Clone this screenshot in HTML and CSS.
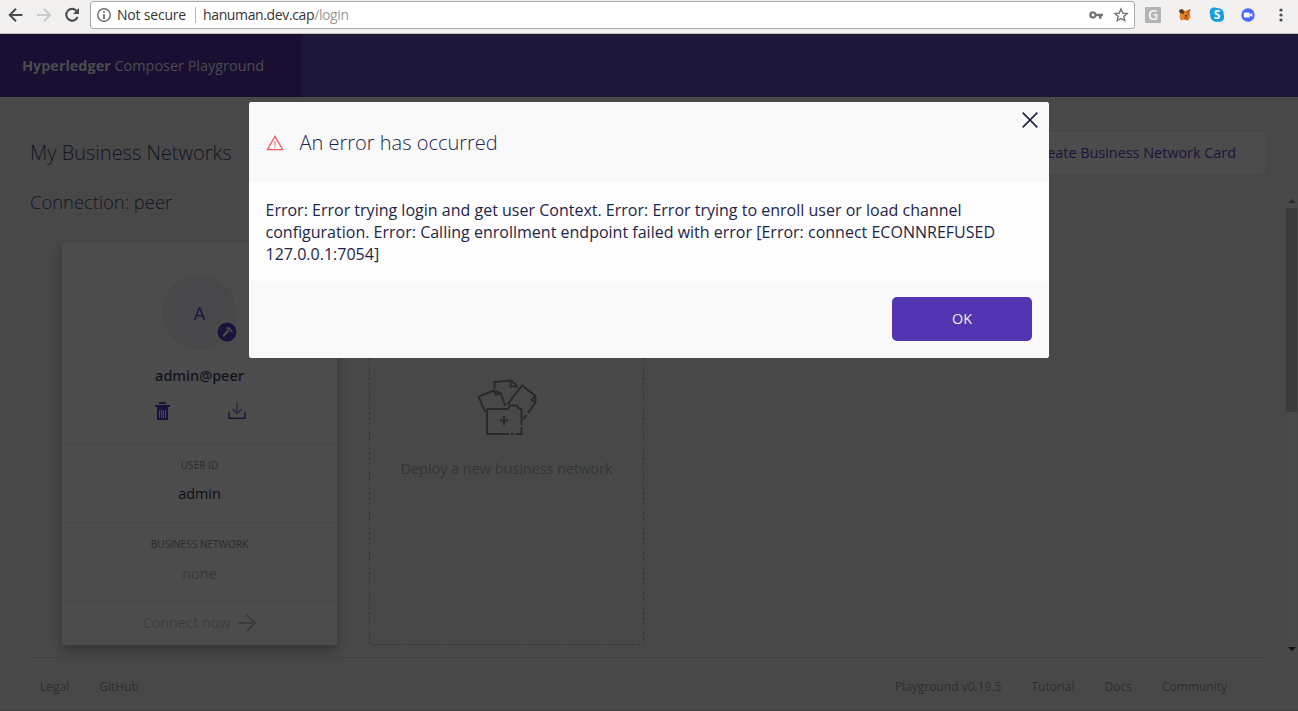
FILE: index.html
```html
<!DOCTYPE html>
<html lang="en">
<head>
<meta charset="utf-8">
<title>Hyperledger Composer Playground</title>
<link rel="stylesheet" href="styles.css">
</head>
<body>
<div class="browser-bar">
  <svg class="nav-icons" width="90" height="33" viewBox="0 0 90 33" fill="none">
    <path d="M22.500 15H10.200M16 8.700L9.700 15L16 21.300" stroke="#4c4c4c" stroke-width="2"/>
    <path d="M37 15H49.500M43.800 8.700L50.100 15L43.800 21.300" stroke="#cbcbca" stroke-width="2"/>
    <path d="M77 11.400A5.900 5.900 0 1 0 77.600 17" stroke="#4c4c4c" stroke-width="2.100"/>
    <path d="M79 8V14H73Z" fill="#4c4c4c"/>
  </svg>
  <div class="address">
    <svg width="16" height="16" viewBox="0 0 16 16" fill="none"><circle cx="8" cy="8" r="6.300" stroke="#6b6b6b" stroke-width="1.400"/><path d="M8 4v1.800M8 7v5" stroke="#6b6b6b" stroke-width="1.700"/></svg>
    <span class="security">Not secure</span>
    <span class="divider"></span>
    <span class="url">hanuman.dev.cap<span class="path">/login</span></span>
    <svg class="key" width="16" height="16" viewBox="0 0 16 16"><path fill="#757575" fill-rule="evenodd" d="M5 4.300a3.700 3.700 0 1 0 3.400 5H11v2.500h2.500V9.300H15V6.700H8.400A3.700 3.700 0 0 0 5 4.300Zm0 2.300a1.400 1.400 0 1 1 0 2.800a1.400 1.400 0 0 1 0-2.800Z"/></svg>
    <svg class="star" width="16" height="16" viewBox="0 0 16 16"><path d="M8 2L9.750 6.100L14.200 6.500L10.800 9.400L11.800 13.700L8 11.400L4.200 13.700L5.200 9.400L1.800 6.500L6.250 6.100Z" fill="none" stroke="#6e6e6e" stroke-width="1.300"/></svg>
  </div>
  <div class="extensions">
    <span class="g-ext">G</span>
    <svg class="fox" width="14" height="14" viewBox="0 0 14 14"><path fill="#e88024" d="M1 3L4 1.500L7 3L12.500 1L11.500 5L12.500 9L10 12.700L6 11.500L3 12.500L1.500 9.500L2 6Z"/><path fill="#593c24" d="M1 2L4 1L6.500 3.500L6 6L2 5Z"/><path fill="#c85e16" d="M9 3L12.500 1L11 5L12 8L8.500 6ZM6 9L9 8L10 12L6 11Z"/><path fill="#3b332e" d="M7 7h2v1.500H7Z"/></svg>
    <span class="skype"><svg width="16" height="16" viewBox="0 0 16 16"><path fill="#179de3" d="M4.500.5C6 .2 7 1 8 1c5 0 7.400 3.500 6.800 7.500c1.200 3-1.200 7-5.300 6.200C4.500 15.500.8 12 1.200 7.500C-.2 4.500 1.500.8 4.500.5Z"/></svg><b>S</b></span>
    <svg class="cam" width="14" height="14" viewBox="0 0 14 14"><circle cx="7" cy="7" r="6.700" fill="#4b66fa"/><rect x="2.800" y="4.500" width="6" height="5" rx="1" fill="#fff"/><path d="M9 6.500l2.300-1.600v4.200L9 7.500Z" fill="#fff"/></svg>
    <svg class="dots" width="4" height="14" viewBox="0 0 4 14" fill="#4b4b4b"><circle cx="2" cy="2" r="1.600"/><circle cx="2" cy="7" r="1.600"/><circle cx="2" cy="12" r="1.600"/></svg>
  </div>
</div>
<header class="app-header"><div class="brand"><b>Hyperledger</b>&nbsp;Composer Playground</div></header>
<main class="page">
  <div class="title-row"><h1>My Business Networks</h1><button class="create">Create Business Network Card</button></div>
  <h2>Connection: peer</h2>
  <div class="cards">
    <article class="card">
      <section class="identity">
        <div class="avatar">A<svg class="badge" width="24" height="24" viewBox="0 0 24 24"><circle cx="12" cy="12" r="12" fill="#4c4c4c"/><circle cx="12" cy="12" r="9.500" fill="#1c133d"/><path d="M8.200 16.200L14 10" stroke="#4c4c4c" stroke-width="2.200"/><path d="M11.300 8.200L14 8L17 11.300L16.200 12" fill="none" stroke="#4c4c4c" stroke-width="1.400"/></svg></div>
        <h3>admin@peer</h3>
        <div class="actions">
          <svg width="16" height="18" viewBox="0 0 16 18"><path fill="#1c133d" d="M4 0h7v2H4ZM0 3h15v2H0ZM2 5h11v13H2Z"/><path d="M4.500 8v8M6.500 8v8M8.500 8v8M10.500 8v8" stroke="#4c4c4c"/></svg>
          <svg width="18" height="18" viewBox="0 0 18 18" fill="none"><path d="M9 1v10M4.500 7.200L9 11.500L13.500 7.200" stroke="#2c2543" stroke-width="1.400"/><path d="M1 10.500V16.300H17V10.500" stroke="#1c133d" stroke-width="1.600"/></svg>
        </div>
      </section>
      <section class="field"><small>USER ID</small><span class="user">admin</span></section>
      <section class="field"><small>BUSINESS NETWORK</small><span class="none">none</span></section>
      <section class="connect"><span>Connect now</span><svg width="18" height="18" viewBox="0 0 18 18" fill="none" stroke="#3b3d3c" stroke-width="2.200"><path d="M0 9H17M8.500 .8L17 9L8.500 17.200"/></svg></section>
    </article>
    <article class="deploy">
      <svg width="60" height="57" viewBox="0 0 60 57" fill="none" stroke="#272b2d" stroke-width="2">
        <path d="M10 30H31L32.500 26.500H40L42 30H44.500V46M44.500 48V55H38.500M36.500 55H34M32 55H10V30"/>
        <path d="M27 37V46M22.500 41.500H31.500"/>
        <path d="M8.200 33L1.500 17.500L17 11.500L23.500 14L28.500 27M17 11.500L19 16L23.500 14"/>
        <path d="M17.500 10V3L33.500 1.500L39.500 6V9M33.500 1.500V7.500L39.500 7"/>
        <path d="M30.500 25.500L45 6.500L58.500 17V23.500L51 34M58.500 17L54.500 21L58.500 23.500M49.500 36L46.500 40"/>
      </svg>
      <span>Deploy a new business network</span>
    </article>
  </div>
  <footer><nav><span>Legal</span><span>GitHub</span></nav><nav><span>Playground v0.19.5</span><span>Tutorial</span><span>Docs</span><span>Community</span></nav></footer>
  <div class="scrollbar"><i class="up"></i><i class="thumb"></i><i class="down"></i></div>
</main>
<div class="modal" role="dialog">
  <div class="modal-head">
    <svg class="warning" width="18" height="16" viewBox="0 0 18 16" fill="none" stroke="#f35d60" stroke-width="1.300"><path d="M9 1.300L16.700 14.600H1.300Z"/><path d="M9 6v4.500M9 11.500v1.300" stroke-width="1.100"/></svg>
    <span>An error has occurred</span>
    <svg class="close" width="16" height="16" viewBox="0 0 16 16"><path d="M.7 .7L15.300 15.300M15.300 .7L.7 15.300" stroke="#1d2548" stroke-width="1.700"/></svg>
  </div>
  <div class="modal-body">Error: Error trying login and get user Context. Error: Error trying to enroll user or load channel configuration. Error: Calling enrollment endpoint failed with error [Error: connect ECONNREFUSED 127.0.0.1:7054]</div>
  <div class="modal-foot"><button class="ok">OK</button></div>
</div>
</body>
</html>
```
FILE: styles.css
```css
* { box-sizing: border-box; }
body { margin: 0; width: 1298px; height: 711px; overflow: hidden; position: relative; background: #484849; font-family: "Open Sans", sans-serif; }
h1, h2, h3 { margin: 0; font-weight: 300; }
button { border: 0; font-family: inherit; }
svg { display: block; flex: none; }

.browser-bar { height: 34px; display: flex; background: #f2f1f0; border-bottom: 1px solid #bfbfbd; }
.address { width: 1045px; height: 28px; margin-top: 1px; padding: 0 5px; display: flex; align-items: center; background: #fff; border: 1px solid #a9a9a8; border-radius: 3px; font-size: 14px; color: #353535; }
.security { margin-left: 5px; padding-bottom: 2px; width: 70px; letter-spacing: -.2px; white-space: nowrap; }
.divider { width: 1px; height: 16px; margin: 0 7px 0 8px; background: #b9b9b9; }
.url { padding-bottom: 2px; letter-spacing: -.37px; }
.path { color: #999; }
.key { margin-left: auto; }
.star { margin-left: 9px; }
.extensions { flex: 1; display: flex; align-items: center; padding: 0 15px 3px 10px; }
.g-ext { width: 16px; height: 16px; background: #b4b4b4; color: #f5f5f5; font: 600 14px/16px "Open Sans", sans-serif; text-align: center; border-radius: 1px; }
.fox { margin-left: 17px; }
.skype { position: relative; margin-left: 17px; }
.skype b { position: absolute; inset: 0; color: #fff; font: 700 12px/15px "Open Sans", sans-serif; text-align: center; }
.cam { margin-left: 16px; }
.dots { margin-left: auto; }

.app-header { height: 63px; background: #1c1639; }
.brand { width: 302px; height: 63px; padding-left: 22px; display: flex; align-items: center; background: #180f33; color: #4c4c4d; font-size: 14.430px; }

.page { position: relative; height: 614px; padding: 35px 32px 0 30px; display: flex; flex-direction: column; color: #12151f; border-bottom: 1px solid #403c3d; }
.title-row { display: flex; justify-content: space-between; align-items: center; height: 42px; }
h1 { font-size: 20px; padding-bottom: 2px; }
h2 { font-size: 18.400px; line-height: 24px; margin-top: 16px; }
.create { height: 42px; padding: 0 30px 2px; background: #4c4c4c; color: #1c133d; border-radius: 4px; font-size: 14.400px; box-shadow: 0 0 2px #414142; }
.cards { flex: none; display: flex; gap: 32px; padding: 28px 0 0 32px; height: 443px; }
.card { width: 275px; height: 402px; background: #4c4c4c; box-shadow: 0 5px 10px rgba(20, 20, 22, .38); margin-top: 1px; }
.identity { height: 200px; padding-top: 32px; display: flex; flex-direction: column; align-items: center; }
.avatar { position: relative; width: 75px; height: 75px; border-radius: 50%; background: #48484b; color: #1c133d; display: flex; align-items: center; justify-content: center; font-size: 18px; font-weight: 500; }
.badge { position: absolute; left: 53px; top: 45px; }
h3 { margin-top: 16px; font-size: 14.400px; line-height: 20px; font-weight: 600; }
.actions { display: flex; gap: 57px; margin: 16px 0 0 2px; }
.field { height: 79px; padding-top: 13px; border-top: 1px solid #474747; display: flex; flex-direction: column; align-items: center; }
.field small { font-size: 10.080px; line-height: 16px; color: #292d2e; }
.field span { margin-top: 11px; font-size: 14.400px; line-height: 20px; }
.field .user { color: #0d0e18; }
.field .none { color: #363938; margin-top: 12px; }
.connect { height: 43px; padding-bottom: 1px; border-top: 1px solid #474747; display: flex; justify-content: center; align-items: center; gap: 8px; font-size: 14.400px; color: #3b3d3c; }
.deploy { width: 275px; height: 403px; border: 1px dashed #353637; border-radius: 4px; padding-top: 136px; display: flex; flex-direction: column; align-items: center; color: #313536; font-size: 14.400px; }
.deploy span { line-height: 20px; margin-top: 23px; }
footer { flex: none; height: 53px; padding: 4px 39px 0 10px; border-top: 1px solid #3f3f40; display: flex; justify-content: space-between; align-items: center; font-size: 12px; color: #2b2f30; }
footer nav { display: flex; gap: 30px; }
.scrollbar { position: absolute; right: 1px; top: 97px; width: 11px; height: 462px; background: #494949; display: flex; flex-direction: column; align-items: center; }
.up, .down { border: 4px solid transparent; border-top: 0; border-bottom-color: #2a2a2a; margin: 5px 0; }
.thumb { width: 11px; height: 204px; background: #3a3a3a; }
.down { margin-top: auto; border-top: 4px solid #111; border-bottom: 0; }

.modal { position: absolute; left: 249px; top: 102px; width: 800px; height: 256px; border-radius: 3px; overflow: hidden; background: #fdfdfd; color: #1d2649; }
.modal-head { position: relative; height: 80px; padding: 0 17px; display: flex; align-items: center; gap: 15.500px; background: #f9f9f9; font-size: 20px; font-weight: 300; }
.warning { margin-top: 2px; }
.close { position: absolute; right: 11px; top: 10px; }
.modal-body { height: 99px; padding: 17px 16px 17px 16.500px; font-size: 16.020px; line-height: 22px; }
.modal-foot { height: 77px; padding: 16px 17px; display: flex; justify-content: flex-end; background: #f9f9f9; }
.ok { width: 140px; height: 44px; padding: 0 0 2px; border-radius: 5px; background: #5235b0; color: #eee; font-size: 14.400px; }
```
